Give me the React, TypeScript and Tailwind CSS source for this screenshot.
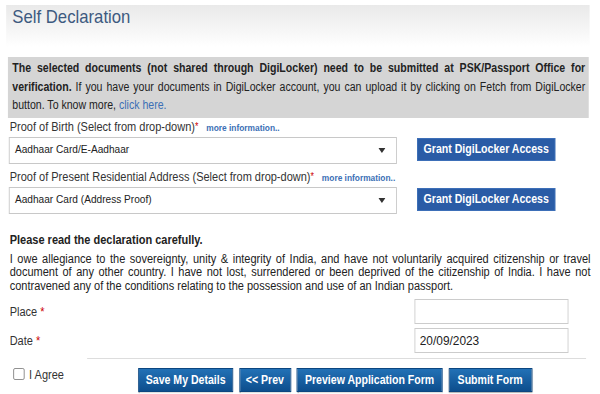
import type { ReactNode } from "react";

// the screenshot is squeezed horizontally, so the form is laid out wider and condensed
export default function App() {
  return (
    <div className="w-[600px] h-[394px] overflow-hidden bg-white">
      <div className="w-[682px] origin-top-left scale-x-[0.88] text-[#333] text-[12.5px] font-['Liberation_Sans',Arial,sans-serif]">
        <div className="pt-[5px] pl-[7px] pr-[12px]">
          <div className="h-[42px] bg-gradient-to-b from-[#e9e9e9] to-white pl-[7px]">
            <h1 className="text-[19px] text-[#3d5a80] leading-[23px]">Self Declaration</h1>
          </div>
        </div>

        <div className="ml-[9px] mr-[13px] mt-[10px] bg-[#d5d5d5] pl-[5px] pr-[4px] pt-[2px] pb-[3px] text-[12px] leading-[18.5px] text-justify text-[#222]">
          <b>The selected documents (not shared through DigiLocker) need to be submitted at PSK/Passport Office for verification.</b>{" "}
          If you have your documents in DigiLocker account, you can upload it by clicking on Fetch from DigiLocker button. To know more,{" "}
          <span className="text-[#3b6fb5]">click here.</span>
        </div>

        <DocRow label="Proof of Birth (Select from drop-down)" value="Aadhaar Card/E-Aadhaar" />
        <DocRow label="Proof of Present Residential Address (Select from drop-down)" value="Aadhaar Card (Address Proof)" />

        <div className="px-[11px] mt-[18px]">
          <p className="font-bold text-[#222] leading-[16px]">Please read the declaration carefully.</p>
          <p className="mt-[5px] leading-[13.5px] text-justify text-[#222]">
            I owe allegiance to the sovereignty, unity &amp; integrity of India, and have not voluntarily acquired citizenship or travel document of any other country. I have not lost, surrendered or been deprived of the citizenship of India. I have not contravened any of the conditions relating to the possession and use of an Indian passport.
          </p>
          <div className="flex items-center justify-between mt-[6px] pr-[25px]">
            <span className="pt-[2px]">Place <span className="text-[#c00]">*</span></span>
            <input className="w-[175px] h-[25px] border border-[#ccc] px-[5px] outline-none" />
          </div>
          <div className="flex items-center justify-between mt-[4px] pr-[25px]">
            <span className="pt-[2px]">Date <span className="text-[#c00]">*</span></span>
            <input
              defaultValue="20/09/2023"
              className="w-[175px] h-[25px] border border-[#ccc] px-[5px] text-[13.5px] text-[#222] outline-none"
            />
          </div>
        </div>
        <div className="ml-[99px] mr-[16px] mt-[5px] border-t border-[#ddd]" />

        <div className="flex items-start pl-[15px] mt-[9px]">
          <label className="flex items-center gap-[5px] w-[142px] -mt-[3px] leading-[14px]">
            <span className="w-[13px] h-[12px] border border-[#8a8a8a] rounded-[2px] bg-white" />
            <span className="pt-[3px]">I Agree</span>
          </label>
          <div className="flex gap-[6.5px]">
            <ActionBtn w="w-[108px]">Save My Details</ActionBtn>
            <ActionBtn w="w-[59px]">&lt;&lt; Prev</ActionBtn>
            <ActionBtn w="w-[166px]">Preview Application Form</ActionBtn>
            <ActionBtn w="w-[95px]">Submit Form</ActionBtn>
          </div>
        </div>
      </div>
    </div>
  );
}

function DocRow({ label, value }: { label: string; value: string }) {
  return (
    <div className="pl-[10px]">
      <div className="pl-[1px] pt-[1px] leading-[16px]">
        {label}
        <span className="text-[#c00] text-[10px] align-top">*</span>
        <span className="ml-[9px] text-[9.5px] font-bold text-[#3b6fb5]">more information..</span>
      </div>
      <div className="flex items-start mt-[1px] mb-[4px]">
        <div className="w-[441px] h-[27px] border border-[#c8c8c8] flex items-center justify-between pl-[6px] pr-[12px] bg-white text-[11.5px] text-[#222]">
          <span>{value}</span>
          <svg width="8" height="5" viewBox="0 0 8 5">
            <path d="M0 0h8L4 5z" fill="#333" />
          </svg>
        </div>
        <button className="ml-[23px] mt-[1px] w-[157px] h-[23px] bg-[#2a5ca6] text-white font-bold text-[12px] border border-[#3d6fb8]">
          Grant DigiLocker Access
        </button>
      </div>
    </div>
  );
}

function ActionBtn({ w, children }: { w: string; children: ReactNode }) {
  return (
    <button
      className={`${w} h-[24px] bg-gradient-to-b from-[#2271b6] to-[#0d4e8d] text-white font-bold text-[12px] border border-[#0c4680] shadow-[0_1px_1px_rgba(0,0,0,0.3)]`}
    >
      {children}
    </button>
  );
}
